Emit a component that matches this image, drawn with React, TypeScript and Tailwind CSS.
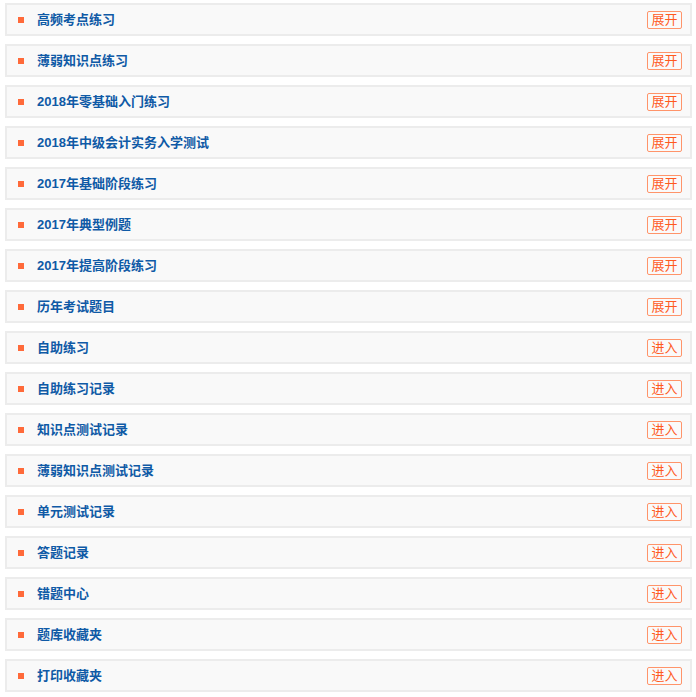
const items: { title: string; action: string }[] = [
  { title: "高频考点练习", action: "展开" },
  { title: "薄弱知识点练习", action: "展开" },
  { title: "2018年零基础入门练习", action: "展开" },
  { title: "2018年中级会计实务入学测试", action: "展开" },
  { title: "2017年基础阶段练习", action: "展开" },
  { title: "2017年典型例题", action: "展开" },
  { title: "2017年提高阶段练习", action: "展开" },
  { title: "历年考试题目", action: "展开" },
  { title: "自助练习", action: "进入" },
  { title: "自助练习记录", action: "进入" },
  { title: "知识点测试记录", action: "进入" },
  { title: "薄弱知识点测试记录", action: "进入" },
  { title: "单元测试记录", action: "进入" },
  { title: "答题记录", action: "进入" },
  { title: "错题中心", action: "进入" },
  { title: "题库收藏夹", action: "进入" },
  { title: "打印收藏夹", action: "进入" },
];

export default function App() {
  return (
    <div
      className="min-h-[697px] bg-white pt-[3px]"
      style={{ fontFamily: '"Liberation Sans", "Noto Sans CJK SC", sans-serif' }}
    >
      <ul className="ml-[5px] mr-[4px] flex flex-col gap-[8px]">
        {items.map((it) => (
          <li
            key={it.title}
            className="flex h-[33px] items-center border-2 border-[#ececec] bg-[#f9f9f9] pl-[11px] pr-[8px]"
          >
            <span className="h-[6px] w-[6px] shrink-0 bg-[#ff6a3a]" />
            <span className="ml-[13px] flex-1 text-[13px] font-bold leading-none text-[#0f5aa6]">
              {it.title}
            </span>
            <button className="h-[18px] w-[35px] rounded-[2px] border border-[#ff946a] bg-[#fafafa] text-[13px] leading-none text-[#ff5a1f]">
              {it.action}
            </button>
          </li>
        ))}
      </ul>
    </div>
  );
}
